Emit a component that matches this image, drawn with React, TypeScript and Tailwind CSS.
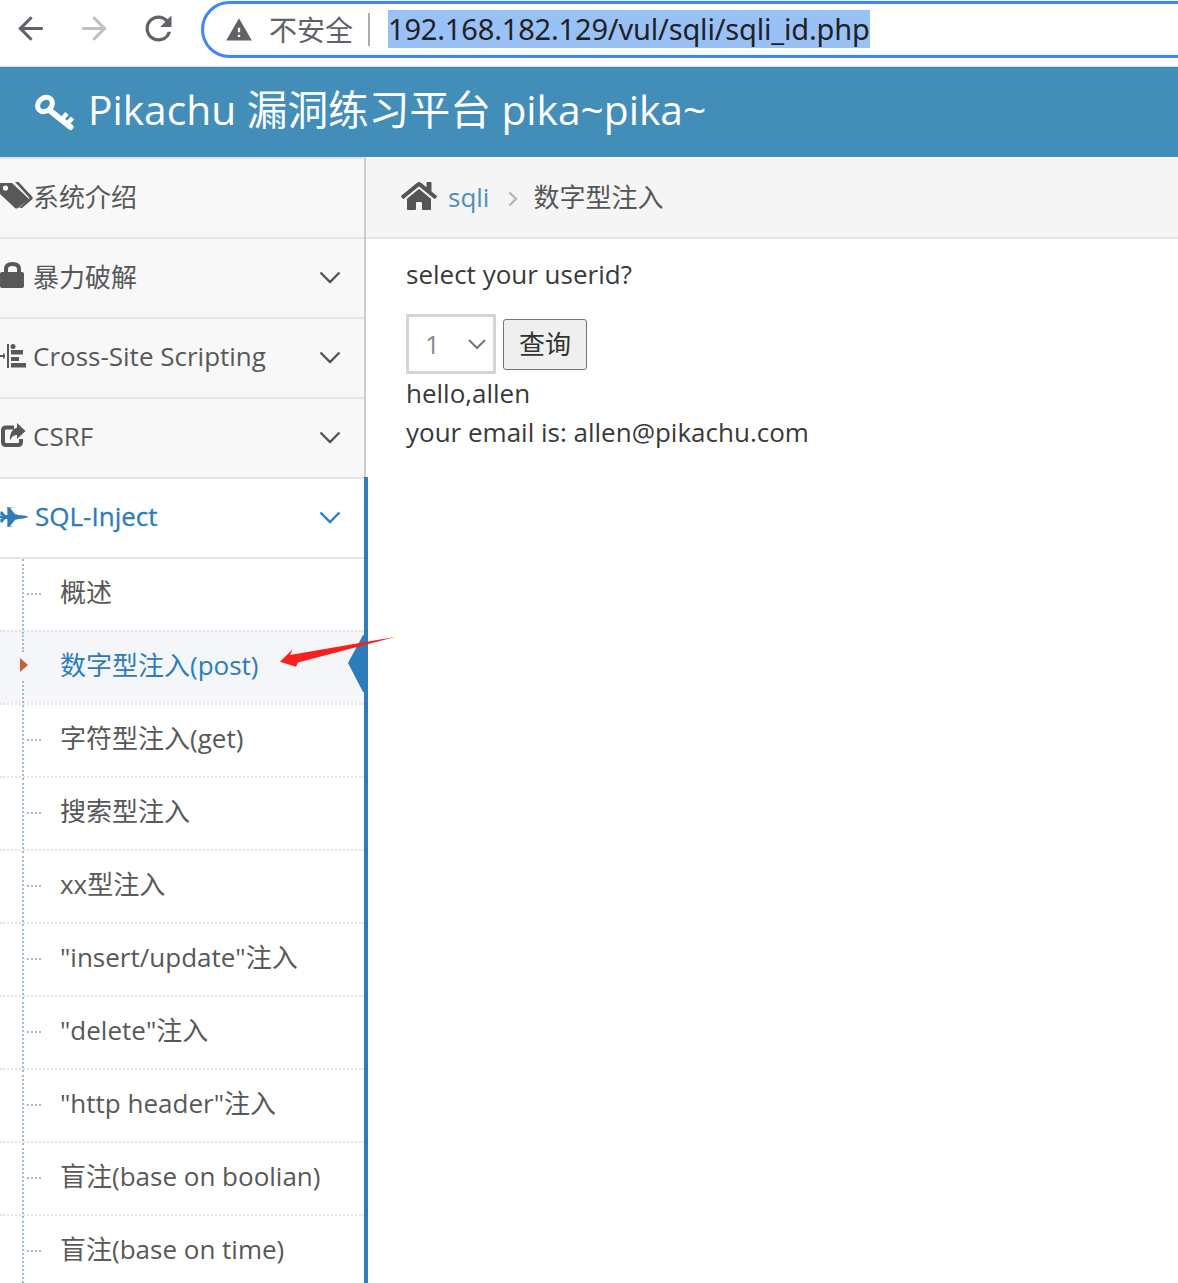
import { FaFighterJet, FaHome } from "react-icons/fa";
import type { ReactNode } from "react";

const font = "[font-family:'Open_Sans','Noto_Sans_CJK_SC',sans-serif]";

function Chevron({ color = "#555555" }: { color?: string }) {
  return (
    <svg width="22" height="13" viewBox="0 0 22 13" fill="none" className="mr-[23px] shrink-0">
      <path d="M1.5 1.5 L11 11 L20.5 1.5" stroke={color} strokeWidth="2.4" />
    </svg>
  );
}

function TopRow({ icon, label, active, chevron = true, labelClass = "" }: { icon: ReactNode; label: string; active?: boolean; chevron?: boolean; labelClass?: string }) {
  return (
    <div className={`flex h-[80px] items-center justify-between border-b-2 border-[#e5e5e5] pb-[2px] ${active ? "bg-white text-[#2b7dbc]" : "bg-[#f8f8f8] text-[#585858]"}`}>
      <div className="flex items-center">
        <span className="flex w-[33px] shrink-0 items-center">{icon}</span>
        <span className={labelClass}>{label}</span>
      </div>
      {chevron && <Chevron color={active ? "#2b7dbc" : "#555555"} />}
    </div>
  );
}

function TagsIcon() {
  return (
    <svg width="33" height="34" viewBox="0 180 33 34" fill="#585858">
      <path fillRule="evenodd" d="M-2 183 H12 L28 198 Q29 199 28 200 L18 208 Q16 209 15 208 L-2 192 Z M5.5 185.5 A2.6 2.6 0 1 0 5.5 190.7 A2.6 2.6 0 1 0 5.5 185.5 Z" />
      <path d="M15 182 H18.500 L32.500 197 Q33 198 32.500 199 L22 208 H19 L29.500 198 Z" />
    </svg>
  );
}

function LockIcon() {
  return (
    <svg width="33" height="34" viewBox="0 260 33 34" fill="#585858">
      <path fillRule="evenodd" d="M4 272 V269 Q4 262 12.500 262 Q21 262 21 269 V272 H22 Q24 272 24 274 V286 Q24 288 22 288 H2 Q0 288 0 286 V274 Q0 272 2 272 Z M8 272 H17 V269 Q17 266 12.500 266 Q8 266 8 269 Z" />
    </svg>
  );
}

function TreeIcon() {
  return (
    <svg width="33" height="34" viewBox="0 340 33 34" fill="#585858">
      <rect x="0" y="355" width="5" height="2" />
      <rect x="3" y="353.500" width="1.500" height="5" />
      <rect x="7" y="344" width="2" height="24" />
      <circle cx="13" cy="346.500" r="2.500" />
      <rect x="11" y="350" width="12" height="4.500" />
      <rect x="11" y="357" width="8" height="4" />
      <rect x="11" y="363" width="15" height="4.500" />
    </svg>
  );
}

function ShareIcon() {
  return (
    <svg width="33" height="34" viewBox="0 420 33 34" fill="none">
      <path d="M14 427.500 H6 Q3 427.500 3 430.500 V442 Q3 445 6 445 H18 Q21 445 21 442 V439" stroke="#585858" strokeWidth="4" />
      <path d="M17 423 L25.500 431 L17 439 V435 Q12 434.500 10 441 Q9 430 17 427.500 Z" fill="#585858" />
    </svg>
  );
}

function KeyIcon() {
  return (
    <svg width="40" height="38" viewBox="0 0 40 38" fill="none" className="mr-[13px] -ml-[1px] shrink-0">
      <ellipse cx="10" cy="11.500" rx="8" ry="6.500" transform="rotate(-42 10 11.500)" stroke="white" strokeWidth="5" />
      <path d="M15.500 18 L35.500 34" stroke="white" strokeWidth="6" strokeLinecap="round" />
      <path d="M26 27 L32 20.500" stroke="white" strokeWidth="4.500" />
      <path d="M32 31 L37.500 25" stroke="white" strokeWidth="4.500" />
    </svg>
  );
}

const subs = [
  "概述",
  "数字型注入(post)",
  "字符型注入(get)",
  "搜索型注入",
  "xx型注入",
  "\"insert/update\"注入",
  "\"delete\"注入",
  "\"http header\"注入",
  "盲注(base on boolian)",
  "盲注(base on time)",
];

function SubRow({ label, index }: { label: string; index: number }) {
  const active = index === 1;
  return (
    <div
      className={`relative flex items-center pl-[60px] ${index === 0 ? "h-[71px]" : "h-[73px] border-t-2 border-dotted border-[#e4e4e4]"} ${active ? "bg-[#f4f6f9] text-[#2b7dbc]" : "text-[#585858]"}`}
    >
      {!active && <span className="absolute left-[22px] top-0 bottom-0 border-l-2 border-dotted border-[#9dbdd6]" />}
      {active ? (
        <>
          <span className="absolute left-[22px] top-0 h-[20px] border-l-2 border-dotted border-[#9dbdd6]" />
          <span className="absolute left-[22px] bottom-0 h-[22px] border-l-2 border-dotted border-[#9dbdd6]" />
          <span className="absolute left-[20px] top-[26px] h-0 w-0 border-y-[7px] border-l-[8px] border-y-transparent border-l-[#c86139]" />
          <svg width="16" height="58" viewBox="0 0 16 58" className="absolute right-0 top-[3px]">
            <polygon points="15,0 0,28 15,57 16,57 16,0" fill="#2b7dbc" />
          </svg>
        </>
      ) : (
        <span className="absolute left-[27px] top-[34px] w-[14px] border-t-2 border-dotted border-[#9dbdd6]" />
      )}
      <span className="relative -top-[2px]">{label}</span>
    </div>
  );
}

export default function App() {
  return (
    <div className={`relative h-[1283px] w-[1178px] overflow-hidden bg-white text-[26px] ${font}`}>
      {/* browser toolbar */}
      <div className="flex h-[67px] items-start overflow-hidden border-b border-[#dadce0] bg-white">
        <div className="flex w-[201px] shrink-0 items-center pl-[12px] pt-[9px]">
          <svg width="37" height="37" viewBox="0 0 24 24" fill="#5f6368"><path d="M20 11H7.830l5.590-5.590L12 4l-8 8 8 8 1.410-1.410L7.830 13H20v-2z" /></svg>
          <svg width="37" height="37" viewBox="0 0 24 24" fill="#bdc1c6" className="ml-[27px]"><path d="M12 4l-1.410 1.410L16.170 11H4v2h12.170l-5.580 5.590L12 20l8-8z" /></svg>
          <svg width="39" height="39" viewBox="0 0 24 24" fill="#5f6368" className="ml-[26px]"><path d="M17.650 6.350A7.958 7.958 0 0 0 12 4c-4.420 0-7.990 3.580-7.990 8s3.570 8 7.990 8c3.730 0 6.840-2.550 7.730-6h-2.080A5.990 5.990 0 0 1 12 18c-3.310 0-6-2.690-6-6s2.690-6 6-6c1.660 0 3.140.690 4.220 1.780L13 11h7V4l-2.350 2.350z" /></svg>
        </div>
        <div className="mt-[1px] flex h-[57px] w-[1100px] shrink-0 items-center rounded-l-[29px] border-[3px] border-[#4285f4] pl-[21px]">
          <svg width="28" height="28" viewBox="0 0 24 24" fill="#5f6368" className="shrink-0"><path d="M1 21h22L12 2 1 21zm12-3h-2v-2h2v2zm0-4h-2v-4h2v4z" /></svg>
          <span className="-mt-[2px] ml-[16px] text-[28px] leading-none text-[#5f6368] [font-family:'Noto_Sans_CJK_SC',sans-serif]">不安全</span>
          <span className="ml-[15px] h-[33px] w-[2px] bg-[#a9abae]" />
          <span className="-mt-[2px] ml-[18px] flex h-[38px] items-center bg-[#9ac1f5] text-[29px] tracking-[-0.17px] text-[#202124] [font-family:'Noto_Sans',sans-serif]">192.168.182.129/vul/sqli/sqli_id.php</span>
        </div>
      </div>

      {/* site header */}
      <div className="flex h-[90px] items-center bg-[#438eb9] pl-[36px] text-[40.7px] text-white">
        <KeyIcon />
        <span className="pb-[4px]">Pikachu 漏洞练习平台 pika~pika~</span>
      </div>

      <div className="flex">
        {/* sidebar */}
        <div className="h-[1126px] w-[366px] shrink-0 overflow-hidden border-r-[2px] border-[#cccccc] border-t-2 border-t-[#e5e5e5] bg-[#f8f8f8]">
          <TopRow icon={<TagsIcon />} label="系统介绍" chevron={false} />
          <TopRow icon={<LockIcon />} label="暴力破解" />
          <TopRow icon={<TreeIcon />} label="Cross-Site Scripting" labelClass="-mt-[2px]" />
          <TopRow icon={<ShareIcon />} label="CSRF" labelClass="-mt-[2px]" />
          <TopRow icon={<FaFighterJet className="h-[24px] w-[28px] text-[#2b7dbc]" />} label="SQL-Inject" active labelClass="-mt-[2px] ml-[2px] [-webkit-text-stroke:0.3px_#2b7dbc]" />
          <div className="bg-white">
            {subs.map((s, i) => (
              <SubRow key={s} label={s} index={i} />
            ))}
          </div>
        </div>
        <span className="absolute left-[364px] top-[477px] h-[806px] w-[4px] bg-[#2b7dbc]" />

        {/* main */}
        <div className="min-w-0 flex-1">
          <div className="flex h-[82px] items-center border-b-2 border-[#e5e5e5] bg-[#f5f5f5] pl-[35px] text-[#555555]">
            <FaHome className="-mt-[2px] h-[32px] w-[36px] text-[#555555]" />
            <span className="ml-[11px] text-[#4c8fbd]">sqli</span>
            <svg width="10" height="16" viewBox="0 0 10 16" fill="none" className="ml-[19px] mt-[3px]"><path d="M1.500 1.500 L8 8 L1.500 14.500" stroke="#b2b6bf" strokeWidth="2.4" /></svg>
            <span className="ml-[15px]">数字型注入</span>
          </div>
          <div className="pl-[40px] pt-[16px] text-[#393939]">
            <p className="leading-[39px]">select your userid?</p>
            <div className="mt-[20px] flex items-center">
              <div className="relative">
                <select className="block h-[60px] w-[90px] appearance-none border-[3px] border-[#d5d5d5] bg-white pl-[16px] text-[#888888] outline-none">
                  <option>1</option>
                </select>
                <svg width="18" height="11" viewBox="0 0 18 11" fill="none" className="absolute right-[10px] top-[25px]"><path d="M1 1 L9 9 L17 1" stroke="#777777" strokeWidth="2" /></svg>
              </div>
              <button className="ml-[7px] mt-[1px] flex h-[51px] w-[84px] items-center justify-center rounded-[3px] border border-[#767676] bg-[#efefef] text-[#333333]">查询</button>
            </div>
            <p className="leading-[39px]">hello,allen</p>
            <p className="leading-[39px]">your email is: allen@pikachu.com</p>
          </div>
        </div>
      </div>

      {/* red annotation arrow */}
      <svg width="120" height="34" viewBox="0 0 120 34" className="absolute left-[279px] top-[635px]">
        <polygon points="1,26.700 13.700,14.300 11,20 117,1.700 19,27.500 17,31.700" fill="#f8201c" />
      </svg>
    </div>
  );
}
